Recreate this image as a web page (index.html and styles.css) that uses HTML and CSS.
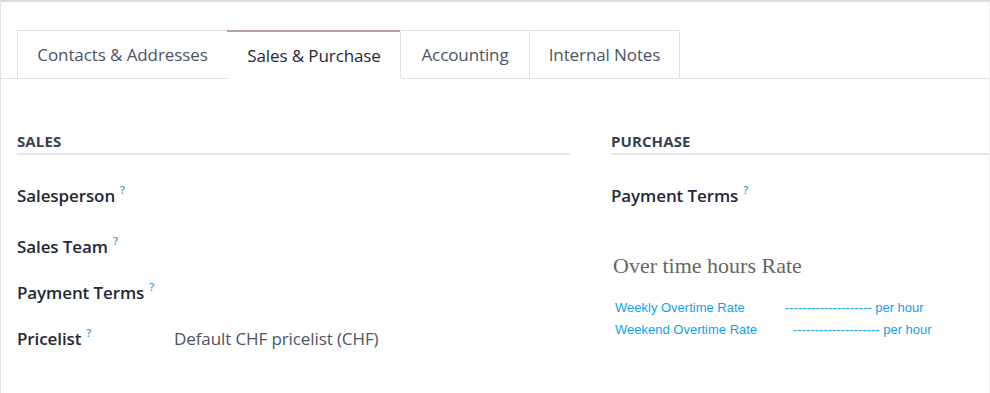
FILE: index.html
```html
<!DOCTYPE html>
<html>
<head>
<meta charset="utf-8">
<link rel="stylesheet" href="styles.css">
</head>
<body>
<div class="sheet">
  <ul class="tabs">
    <li class="tab">Contacts &amp; Addresses</li>
    <li class="tab active">Sales &amp; Purchase</li>
    <li class="tab">Accounting</li>
    <li class="tab">Internal Notes</li>
  </ul>
  <div class="groups">
    <div class="group group-left">
      <div class="group-title">SALES</div>
      <div class="field f1"><span class="label">Salesperson<sup class="help">?</sup></span></div>
      <div class="field f2"><span class="label">Sales Team<sup class="help">?</sup></span></div>
      <div class="field f3"><span class="label">Payment Terms<sup class="help">?</sup></span></div>
      <div class="field f4"><span class="label">Pricelist<sup class="help">?</sup></span><span class="value">Default CHF pricelist (CHF)</span></div>
    </div>
    <div class="group group-right">
      <div class="group-title">PURCHASE</div>
      <div class="field f1"><span class="label">Payment Terms<sup class="help">?</sup></span></div>
      <div class="overtime">
        <h3 class="ot-title">Over time hours Rate</h3>
        <p class="ot-line"><span class="ot-name w1">Weekly Overtime Rate</span><span>-------------------- per hour</span></p>
        <p class="ot-line"><span class="ot-name w2">Weekend Overtime Rate</span><span>-------------------- per hour</span></p>
      </div>
    </div>
  </div>
</div>
</body>
</html>
```
FILE: styles.css
```css
html, body {
  margin: 0;
  padding: 0;
  background: #fff;
}
body {
  font-family: "Open Sans", "Noto Sans", sans-serif;
  color: #374151;
}
.sheet {
  height: 393px;
  box-sizing: border-box;
  border-top: 2px solid #dcdcdc;
  border-left: 1px solid #e2e2e2;
  border-right: 1px solid #eeeeee;
  overflow: hidden;
}
.tabs {
  list-style: none;
  margin: 28px 0 0 0;
  padding: 0 0 0 16px;
  display: flex;
  border-bottom: 1px solid #dee2e6;
}
.tab {
  height: 48px;
  box-sizing: border-box;
  display: flex;
  align-items: center;
  justify-content: center;
  padding: 0;
  font-size: 17px;
  color: #4b5563;
  border: 1px solid #dee2e6;
  border-bottom: none;
  letter-spacing: -0.1px;
}
.tab + .tab { margin-left: -1px; }
.tab:nth-child(1) { width: 211px; }
.tab:nth-child(2) { width: 174px; }
.tab:nth-child(3) { width: 130px; }
.tab:nth-child(4) { width: 151px; }
.tab.active {
  border: none;
  border-top: 2px solid #b8a0ac;
  color: #1f2937;
  background: #fff;
  margin-bottom: -1px;
  height: 49px;
}
.groups {
  display: grid;
  grid-template-columns: 553px 1fr;
  column-gap: 41px;
  padding-left: 16px;
  padding-top: 51px;
}
.group-title {
  font-size: 15px;
  font-weight: 700;
  color: #374151;
  letter-spacing: 0.1px;
  line-height: 22px;
  padding-bottom: 1px;
  border-bottom: 2px solid #e5e7eb;
}
.field {
  display: flex;
  align-items: baseline;
  font-size: 17px;
  line-height: 22px;
}
.f1 { margin-top: 30px; }
.f2 { margin-top: 29px; }
.f3 { margin-top: 24px; }
.f4 { margin-top: 24px; }
.label {
  font-weight: 600;
  color: #1f2937;
  width: 157px;
  flex: none;
  letter-spacing: -0.1px;
}
.help {
  color: #3b9bd4;
  font-size: 11px;
  font-weight: 600;
  margin-left: 5px;
  vertical-align: 8px;
  line-height: 0;
}
.value {
  color: #4b5563;
  letter-spacing: -0.1px;
}
.overtime {
  padding-left: 2px;
}
.ot-title {
  font-family: "Liberation Serif", "Times New Roman", serif;
  font-weight: 400;
  font-size: 22px;
  color: #666666;
  margin: 47px 0 0 0;
  line-height: 24px;
}
.ot-line {
  margin: 0 0 0 2px;
  font-family: "Liberation Sans", Arial, sans-serif;
  font-size: 13px;
  line-height: 22px;
  color: #14a0f0;
  display: flex;
}
.ot-line:first-of-type { margin-top: 19px; }
.ot-name { flex: none; }
.w1 { width: 170px; }
.w2 { width: 178px; }
```
